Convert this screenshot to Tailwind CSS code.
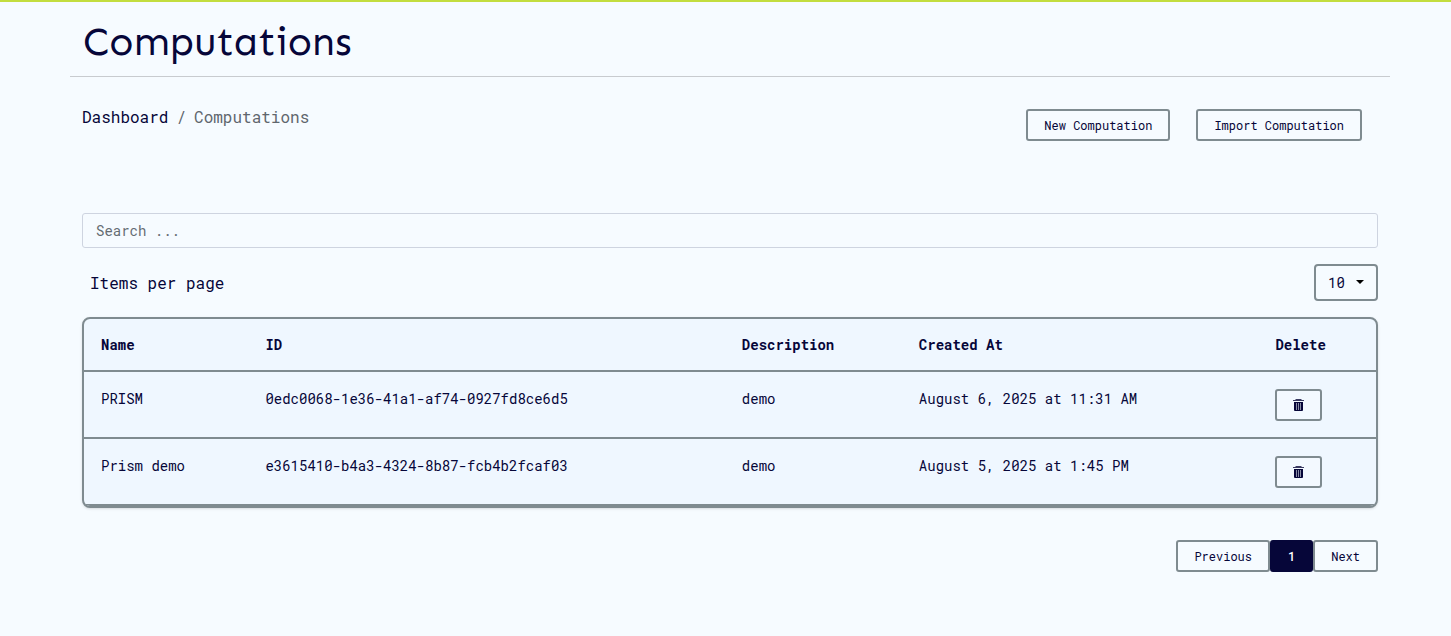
<!DOCTYPE html>
<html lang="en">
<head>
  <meta charset="UTF-8">
  <meta name="viewport" content="width=device-width, initial-scale=1.0">
  <title>Computations</title>
  <script src="https://cdn.jsdelivr.net/npm/@tailwindcss/browser@4"></script>
</head>
<body class="min-h-screen bg-[#f6fbff] border-t-2 border-[#c3dd3f] font-['Roboto_Mono','Liberation_Mono',monospace] text-[#060639]">
  <div class="max-w-[1329px] mx-auto pl-[9px]">
    <header class="px-[13px] pt-[13px] pb-[7px] border-b border-[#c8cbcf]">
      <h1 class="text-[40px] leading-[54px] font-['Sen','Lato',sans-serif]">Computations</h1>
    </header>

    <main class="px-3">
      <div class="flex justify-between items-start pt-8">
        <nav aria-label="Breadcrumb">
          <ol class="flex gap-2 text-base leading-6 -mt-1">
            <li><a href="#">Dashboard</a></li>
            <li class="text-[#5f666d]" aria-hidden="true">/</li>
            <li class="text-[#5f666d]" aria-current="page">Computations</li>
          </ol>
        </nav>
        <div class="flex gap-[26px] pr-4">
          <button type="button" class="h-8 px-4 border-2 border-[#7f8b90] rounded-[3px] text-xs">New Computation</button>
          <button type="button" class="h-8 px-4 border-2 border-[#7f8b90] rounded-[3px] text-xs">Import Computation</button>
        </div>
      </div>

      <input type="search" aria-label="Search" placeholder="Search ..." class="block w-full h-[35px] mt-[72px] px-[13px] border border-[#ced4e0] rounded-[3px] bg-transparent text-sm placeholder:text-[#656c72]">

      <div class="flex justify-between items-center mt-4 pl-2">
        <label for="pageSize" class="text-base">Items per page</label>
        <div class="relative">
          <select id="pageSize" class="appearance-none block w-16 h-[37px] pl-3 border-2 border-[#7f8b90] rounded-[4px] bg-transparent text-sm">
            <option>10</option>
            <option>25</option>
            <option>50</option>
          </select>
          <svg class="absolute right-[14px] top-4 w-2 h-1 pointer-events-none" viewBox="0 0 8 4" fill="#000"><path d="M0 0h8L4 4z"/></svg>
        </div>
      </div>

      <div class="mt-4 border-2 border-[#7f8b90] rounded-lg overflow-hidden bg-[#eff7ff] shadow-sm">
        <table class="w-full table-fixed border-separate border-spacing-0 text-sm leading-[21px] text-left">
          <thead>
            <tr class="h-[53px]">
              <th class="w-[12.8%] pl-[17px] border-b-2 border-[#7f8b90] font-bold">Name</th>
              <th class="w-[36.8%] px-4 border-b-2 border-[#7f8b90] font-bold">ID</th>
              <th class="w-[13.7%] pl-[17px] border-b-2 border-[#7f8b90] font-bold">Description</th>
              <th class="w-[27.6%] pl-[17px] border-b-2 border-[#7f8b90] font-bold">Created At</th>
              <th class="pl-[17px] border-b-2 border-[#7f8b90] font-bold">Delete</th>
            </tr>
          </thead>
          <tbody>
            <tr class="h-[67px] align-top">
              <td class="py-4 pl-[17px] border-b-2 border-[#7f8b90]">PRISM</td>
              <td class="p-4 border-b-2 border-[#7f8b90]">0edc0068-1e36-41a1-af74-0927fd8ce6d5</td>
              <td class="py-4 pl-[17px] border-b-2 border-[#7f8b90]">demo</td>
              <td class="py-4 pl-[17px] border-b-2 border-[#7f8b90]">August 6, 2025 at 11:31 AM</td>
              <td class="py-4 pl-[17px] border-b-2 border-[#7f8b90] align-middle">
                <button type="button" aria-label="Delete PRISM" class="flex items-center justify-center w-[47px] h-8 border-2 border-[#7f8b90] rounded-[3px] bg-[#f3f9ff]">
                  <svg class="w-[11px] h-3" viewBox="0 0 11 12"><path d="M3 0h5l1 1h2v1H0V1h2z" fill="#3a3b62"/><path d="M1 3h9v8a1 1 0 0 1-1 1H2a1 1 0 0 1-1-1z" fill="#060639"/><path d="M3.5 4v7M5.5 4v7M7.5 4v7" stroke="#a9afc2" stroke-width=".8"/></svg>
                </button>
              </td>
            </tr>
            <tr class="h-[67px] align-top">
              <td class="py-4 pl-[17px] border-b-2 border-[#7f8b90]">Prism demo</td>
              <td class="p-4 border-b-2 border-[#7f8b90]">e3615410-b4a3-4324-8b87-fcb4b2fcaf03</td>
              <td class="py-4 pl-[17px] border-b-2 border-[#7f8b90]">demo</td>
              <td class="py-4 pl-[17px] border-b-2 border-[#7f8b90]">August 5, 2025 at 1:45 PM</td>
              <td class="py-4 pl-[17px] border-b-2 border-[#7f8b90] align-middle">
                <button type="button" aria-label="Delete Prism demo" class="flex items-center justify-center w-[47px] h-8 border-2 border-[#7f8b90] rounded-[3px] bg-[#f3f9ff]">
                  <svg class="w-[11px] h-3" viewBox="0 0 11 12"><path d="M3 0h5l1 1h2v1H0V1h2z" fill="#3a3b62"/><path d="M1 3h9v8a1 1 0 0 1-1 1H2a1 1 0 0 1-1-1z" fill="#060639"/><path d="M3.5 4v7M5.5 4v7M7.5 4v7" stroke="#a9afc2" stroke-width=".8"/></svg>
                </button>
              </td>
            </tr>
          </tbody>
        </table>
      </div>

      <nav class="flex justify-end mt-8 pb-8 text-xs" aria-label="Pagination">
        <button type="button" class="h-8 px-4 border-2 border-[#7f8b90] rounded-[3px]">Previous</button>
        <button type="button" class="h-8 px-[18px] rounded-[3px] bg-[#060639] text-white font-medium" aria-current="page">1</button>
        <button type="button" class="h-8 px-4 border-2 border-[#7f8b90] rounded-[3px]">Next</button>
      </nav>
    </main>
  </div>
</body>
</html>
